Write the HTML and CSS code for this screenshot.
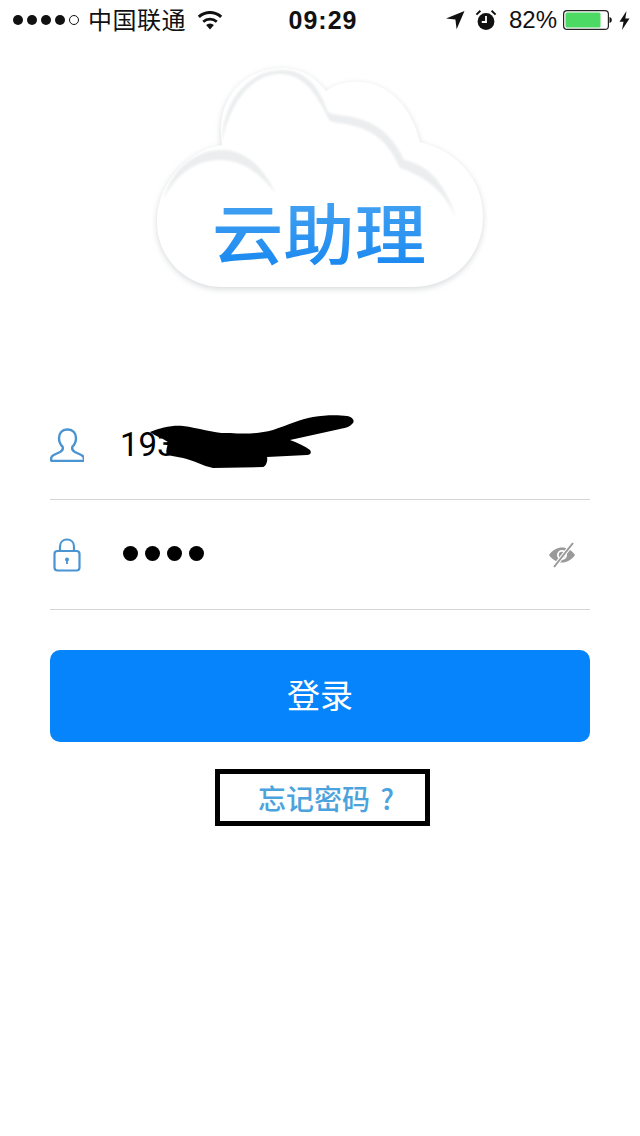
FILE: index.html
```html
<!DOCTYPE html>
<html lang="zh-CN">
<head>
    <meta charset="UTF-8">
    <meta name="viewport" content="width=device-width, initial-scale=1.0">
    <title>云助理</title>
    <link rel="stylesheet" href="styles.css">
</head>
<body>
    <!-- 状态栏 -->
    <div class="status-bar">
        <div class="status-left">
            <span class="signal">
                <i class="dot"></i><i class="dot"></i><i class="dot"></i><i class="dot"></i><i class="dot empty"></i>
            </span>
            <span class="carrier">中国联通</span>
            <svg class="wifi" width="28" height="19" viewBox="0 0 26 18">
                <path d="M13 17.5 9.3 13.2a5.4 5.4 0 0 1 7.4 0Z" fill="#111"/>
                <path d="M6.6 10.1a9.4 9.4 0 0 1 12.8 0" fill="none" stroke="#111" stroke-width="2.6"/>
                <path d="M2.4 5.6a15.4 15.4 0 0 1 21.2 0" fill="none" stroke="#111" stroke-width="2.8"/>
            </svg>
        </div>
        <div class="status-time">09:29</div>
        <div class="status-right">
            <svg width="20" height="20" viewBox="0 0 20 20">
                <path d="M19.5 1 11.6 19.2 10.4 9.6 1 8.6Z" fill="#111"/>
            </svg>
            <svg class="alarm" width="22" height="22" viewBox="0 0 22 22">
                <circle cx="11" cy="12.5" r="8.4" fill="#111"/>
                <path d="M11 7v6H6.8" fill="none" stroke="#fff" stroke-width="1.8"/>
                <path d="M1.4 5.6 5.4 1.8M20.6 5.6 16.6 1.8" stroke="#111" stroke-width="2"/>
            </svg>
            <span class="percent">82%</span>
            <svg class="battery" width="49" height="20" viewBox="0 0 49 20">
                <rect x="0.6" y="0.6" width="44.8" height="18.8" rx="3.5" fill="#fff" stroke="#222" stroke-width="1.2"/>
                <rect x="2.5" y="2.5" width="35" height="15" rx="1.5" fill="#4cd964"/>
                <path d="M46.5 7v6c1.500-.3 2.300-1.500 2.300-3s-.8-2.700-2.300-3Z" fill="#111"/>
            </svg>
            <svg width="11" height="19" viewBox="0 0 11 19">
                <path d="M7.500 0 .5 10.800h4L3 19l7.500-11.500h-4.200Z" fill="#111"/>
            </svg>
        </div>
    </div>

    <!-- logo -->
    <svg class="logo" width="340" height="240" viewBox="150 60 340 240">
        <defs>
            <linearGradient id="logoText" x1="0" y1="0" x2="0" y2="1">
                <stop offset="0" stop-color="#4ea8f2"/>
                <stop offset="1" stop-color="#1485f0"/>
            </linearGradient>
            <filter id="cloudShadow" x="-10%" y="-10%" width="120%" height="125%">
                <feGaussianBlur stdDeviation="3"/>
            </filter>
            <filter id="softShade" x="-10%" y="-10%" width="120%" height="120%">
                <feGaussianBlur stdDeviation="1"/>
            </filter>
        </defs>
        <path d="M222 145C214 98 246 68 282 68C302 68 316 78 326 91C352 72 404 78 420 142C455 150 483 178 483 216C483 258 452 287 412 287H222C186 287 157 258 157 222C157 182 188 150 222 145Z" fill="#d6d9db" filter="url(#cloudShadow)" transform="translate(0 2)"/>
        <path d="M222 145C214 98 246 68 282 68C302 68 316 78 326 91C352 72 404 78 420 142C455 150 483 178 483 216C483 258 452 287 412 287H222C186 287 157 258 157 222C157 182 188 150 222 145Z" fill="#fff"/>
        <path d="M163 200C172 168 196 150 222 150C246 150 264 168 276 194C258 170 240 160 220 160C196 160 176 174 163 200Z" fill="#ebedee" filter="url(#softShade)"/>
        <path d="M222 142C222 100 250 70 282 70C304 70 318 84 328 112C334 116 346 115 356 118C382 124 396 142 404 160C424 164 444 178 456 218C444 190 424 176 400 168C390 146 378 132 354 126C342 122 330 124 328 118C316 92 302 74 280 74C252 74 230 102 222 142Z" fill="#ebedee" filter="url(#softShade)"/>
        <text class="logo-text" x="212" y="259" textLength="214" lengthAdjust="spacingAndGlyphs" fill="url(#logoText)">云助理</text>
    </svg>

    <form class="login-form">
        <div class="field">
            <svg class="field-icon" width="34" height="34" viewBox="0 0 34 34">
                <path d="M17 1.500c-5 0-8 3.800-8 8.500 0 3.700 1.500 6.800 3.600 8.700.6 2.200-.2 4.200-2.500 5.300l-6.400 3c-1.900.9-2.700 2.300-2.700 4.400 0 1 .6 1.600 1.600 1.600h29.800c1 0 1.600-.6 1.600-1.600 0-2.100-.8-3.500-2.700-4.400l-6.400-3c-2.300-1.100-3.100-3.100-2.500-5.300 2.100-1.900 3.600-5 3.600-8.700 0-4.700-3-8.500-8-8.500Z" fill="none" stroke="#4a94d2" stroke-width="2.400"/>
            </svg>
            <span class="field-value">193</span>
            <svg class="scribble" width="220" height="65" viewBox="140 410 220 65">
                <path d="M150 432C160 428 172 425 183 426C200 428 215 434 230 433C245 434 258 434 273 430C288 425 300 419 313 417C325 415 338 415 347 416C352 417 355 420 353 423C350 427 345 428 340 429L290 440C298 443 305 446 310 450C312 453 310 455 307 455L267 457C268 461 266 466 263 467L213 468C203 466 193 460 183 458L167 455C165 450 168 446 168 442C162 438 155 436 150 432Z" fill="#000"/>
            </svg>
        </div>
        <div class="field">
            <svg class="field-icon lock" width="28" height="34" viewBox="0 0 28 34">
                <path d="M7 13V8.500C7 4.300 10 1.500 14 1.500s7 2.800 7 7V13" fill="none" stroke="#4a94d2" stroke-width="2.200"/>
                <rect x="1.500" y="13" width="25" height="19.500" rx="3" fill="none" stroke="#4a94d2" stroke-width="2.200"/>
                <circle cx="14" cy="21.500" r="2" fill="#4a94d2"/>
                <path d="M14 22v4" stroke="#4a94d2" stroke-width="1.800"/>
            </svg>
            <span class="password">
                <i class="pw-dot"></i><i class="pw-dot"></i><i class="pw-dot"></i><i class="pw-dot"></i>
            </span>
            <svg class="eye" width="28" height="28" viewBox="0 0 28 28">
                <path d="M1 14C5 8.500 9.500 6.500 14 6.500S23 8.500 27 14c-4 5.500-8.500 7.500-13 7.500S5 19.500 1 14Z" fill="#999"/>
                <circle cx="14" cy="14" r="5" fill="#fff"/>
                <circle cx="14" cy="14" r="3.200" fill="#999"/>
                <path d="M25 2 6 26" stroke="#fff" stroke-width="4"/>
                <path d="M25 2 6 26" stroke="#999" stroke-width="2"/>
            </svg>
        </div>
        <button class="login-btn" type="button">登录</button>
        <a class="forgot">忘记密码 ?</a>
    </form>
</body>
</html>
```

FILE: styles.css
```css
body {
    margin: 0;
    background: #fff;
    font-family: "Liberation Sans", "Noto Sans CJK SC", sans-serif;
    color: #111;
}
.status-bar {
    display: grid;
    grid-template-columns: 1fr auto 1fr;
    align-items: center;
    height: 40px;
    padding: 0 10px 0 13px;
    font-size: 24px;
}
.status-left, .status-right {
    display: flex;
    align-items: center;
}
.status-right {
    justify-content: flex-end;
}
.signal {
    display: flex;
    gap: 4px;
}
.dot {
    width: 10px;
    height: 10px;
    border-radius: 50%;
    background: #111;
    box-sizing: border-box;
}
.dot.empty {
    background: #fff;
    border: 1px solid #111;
}
.carrier {
    margin-left: 9px;
    padding-bottom: 3px;
    letter-spacing: 0.5px;
}
.wifi {
    margin-left: 10px;
}
.status-time {
    font-weight: bold;
    font-size: 25px;
    letter-spacing: 1px;
    margin-left: 3px;
}
.alarm {
    margin-left: 10px;
}
.percent {
    margin-left: 12px;
}
.battery {
    margin-left: 6px;
}
.status-right svg:last-child {
    margin-left: 7px;
}
.logo {
    display: block;
    margin: 20px auto 0;
}
.logo-text {
    font-family: "Noto Sans CJK SC", sans-serif;
    font-size: 66px;
    font-weight: 500;
}
.login-form {
    display: flex;
    flex-direction: column;
    margin: 90px 50px 0;
}
.field {
    position: relative;
    display: flex;
    align-items: center;
    height: 110px;
    box-sizing: border-box;
    border-bottom: 1px solid #d4d4d4;
}
.field-icon {
    flex: none;
}
.field-icon.lock {
    margin-left: 3px;
}
.field-value {
    margin-left: 36px;
    font-family: Roboto, sans-serif;
    font-size: 33px;
    color: #000;
}
.scribble {
    position: absolute;
    left: 90px;
    top: 20px;
}
.password {
    display: flex;
    gap: 7px;
    margin-left: 42px;
    margin-bottom: 2px;
}
.pw-dot {
    width: 15px;
    height: 15px;
    border-radius: 50%;
    background: #000;
}
.eye {
    margin-left: auto;
    margin-right: 14px;
}
.login-btn {
    margin-top: 40px;
    height: 92px;
    padding: 0 0 4px;
    border: none;
    border-radius: 10px;
    background-color: #0684fc;
    color: #fff;
    font-family: "Noto Sans CJK SC", sans-serif;
    font-size: 33px;
}
.forgot {
    align-self: flex-start;
    display: flex;
    align-items: center;
    box-sizing: border-box;
    width: 215px;
    height: 57px;
    margin: 27px 0 0 165px;
    padding-left: 38px;
    border: 5px solid #000;
    color: #4ba3dd;
    font-family: "Noto Sans CJK SC", sans-serif;
    font-size: 28px;
    font-weight: 500;
    word-spacing: 4px;
    white-space: pre;
}
```
